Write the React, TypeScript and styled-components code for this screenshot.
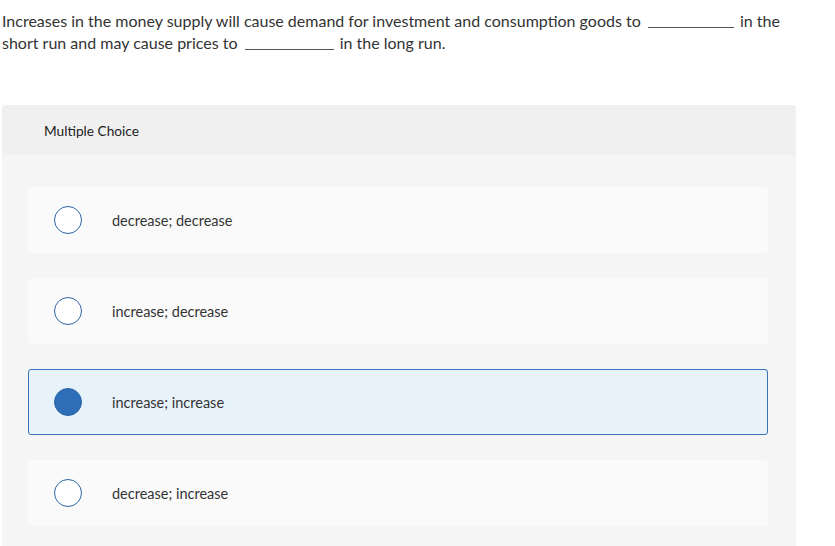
import React from "react";
import styled, { createGlobalStyle } from "styled-components";

const GlobalStyle = createGlobalStyle`
  html, body {
    margin: 0;
    padding: 0;
    background: #ffffff;
  }
  body {
    font-family: "Lato", "Liberation Sans", sans-serif;
    color: #333333;
  }
`;

const Page = styled.div`
  width: 835px;
  height: 546px;
  overflow: hidden;
  padding: 10px 0 0 2px;
  box-sizing: border-box;
`;

const Question = styled.p`
  margin: 0;
  width: 795px;
  font-size: 16px;
  line-height: 22px;
  color: #333333;
`;

const Blank = styled.span<{ $w: number }>`
  display: inline-block;
  width: ${({ $w }) => $w}px;
  margin: 0 2px 0 3px;
  border-bottom: 1px solid #555555;
  vertical-align: -1px;
`;

const Panel = styled.section`
  margin-top: 51px;
  width: 794px;
  background: #f5f5f5;
  border-radius: 4px 4px 0 0;
  padding-bottom: 40px;
`;

const PanelHeader = styled.div`
  height: 50px;
  display: flex;
  align-items: center;
  padding-left: 42px;
  background: #f0f0f0;
  border-radius: 4px 4px 0 0;
  font-size: 13.7px;
  color: #222222;
`;

const Choices = styled.div`
  display: flex;
  flex-direction: column;
  gap: 25px;
  padding: 32px 0 0 26px;
`;

const Choice = styled.label<{ $selected?: boolean }>`
  width: 740px;
  height: 66px;
  box-sizing: border-box;
  display: flex;
  align-items: center;
  padding-left: 25px;
  border-radius: 3px;
  background: ${({ $selected }) => ($selected ? "#e8f2fb" : "#fafafa")};
  border: 1px solid ${({ $selected }) => ($selected ? "#3a72bb" : "#fafafa")};
  cursor: pointer;
`;

const Radio = styled.span<{ $selected?: boolean }>`
  width: 28px;
  height: 28px;
  box-sizing: border-box;
  border-radius: 50%;
  border: 1.5px solid #2b64a3;
  background: ${({ $selected }) => ($selected ? "#2f6eb8" : "#ffffff")};
  flex-shrink: 0;
`;

const ChoiceText = styled.span`
  margin-left: 30px;
  font-size: 14.5px;
  color: #333333;
`;

const options = [
  "decrease; decrease",
  "increase; decrease",
  "increase; increase",
  "decrease; increase",
];

export default function App() {
  const selected = 2;
  return (
    <Page>
      <GlobalStyle />
      <Question>
        Increases in the money supply will cause demand for investment and
        consumption goods to <Blank $w={86} /> in the short run and may cause
        prices to <Blank $w={89} /> in the long run.
      </Question>
      <Panel>
        <PanelHeader>Multiple Choice</PanelHeader>
        <Choices>
          {options.map((o, i) => (
            <Choice key={o} $selected={i === selected}>
              <Radio $selected={i === selected} />
              <ChoiceText>{o}</ChoiceText>
            </Choice>
          ))}
        </Choices>
      </Panel>
    </Page>
  );
}
